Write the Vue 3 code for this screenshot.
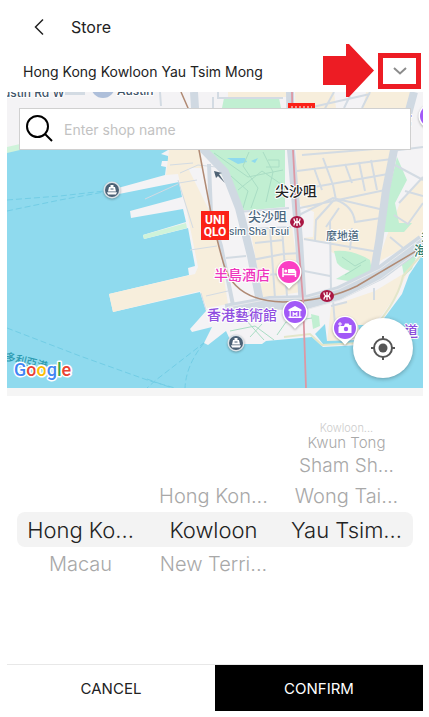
<script setup>
import { ref } from "vue";

const shopName = ref("");

const wheels = ref([
  { name: "Region", selected: 0, options: ["Hong Ko...", "Macau"] },
  {
    name: "Area",
    selected: 1,
    options: ["Hong Kon...", "Kowloon", "New Terri..."],
  },
  {
    name: "District",
    selected: 4,
    options: [
      "Kowloon...",
      "Kwun Tong",
      "Sham Sh...",
      "Wong Tai...",
      "Yau Tsim...",
    ],
  },
]);

// nine slots per wheel, the middle one is the current choice
const slots = [-4, -3, -2, -1, 0, 1, 2, 3, 4];

const labels = [
  { text: "ustin Rd W", x: 3, y: 97, size: 12, kind: "road-name" },
  { text: "Austin", x: 117, y: 95, size: 12, kind: "road-name" },
  { text: "尖沙咀", x: 275, y: 196, size: 14, kind: "station" },
  { text: "尖沙咀", x: 248, y: 221, size: 13, kind: "area" },
  { text: "sim Sha Tsui", x: 229, y: 235, size: 10, kind: "area" },
  { text: "麼地道", x: 326, y: 240, size: 11, kind: "area" },
  { text: "半島酒店", x: 214, y: 280, size: 14, kind: "hotel" },
  { text: "香港藝術館", x: 207, y: 320, size: 14, kind: "sight" },
  { text: "道", x: 404, y: 336, size: 14, kind: "sight" },
  { text: "館", x: 399, y: 124, size: 13, kind: "sight" },
  { text: "尖", x: 421, y: 240, size: 13, kind: "coast" },
  { text: "海", x: 414, y: 255, size: 13, kind: "coast" },
];

const pins = [
  { x: 289, y: 272, color: "#fb3fc4", icon: "bed" },
  { x: 295, y: 312, color: "#a259f7", icon: "museum" },
  { x: 345, y: 328, color: "#a259f7", icon: "camera" },
  { x: 431, y: 116, color: "#a259f7", icon: "" },
];

const ferries = [
  { x: 112, y: 190 },
  { x: 236, y: 343 },
];

const stations = [
  { x: 297, y: 222 },
  { x: 327, y: 296 },
];
</script>

<template>
  <main class="page">
    <header class="header">
      <button class="back" aria-label="Back">
        <svg width="12" height="18" viewBox="0 0 12 18">
          <path d="M10 1.500 2.500 9l7.500 7.500" />
        </svg>
      </button>
      <h1>Store</h1>
    </header>

    <section class="address">
      <span>Hong Kong Kowloon Yau Tsim Mong</span>
      <svg class="arrow" width="51" height="53" viewBox="0 0 51 53">
        <path d="M0 12h23V0h3l25 26.500L26 53h-3V41H0z" />
      </svg>
      <button class="toggle" aria-label="Change district">
        <svg width="14" height="8" viewBox="0 0 14 8">
          <path d="M1 1l6 5.500L13 1" />
        </svg>
      </button>
    </section>

    <section class="map">
      <svg class="canvas" viewBox="7 92 416 296">
        <rect x="7" y="92" width="416" height="296" fill="#8fdaee" />

        <!-- ferry routes -->
        <g class="route">
          <path d="M7 200 60 196 104 191M7 211 60 200 104 192" />
          <path d="M7 328 80 356 150 381 175 388" />
          <path d="M205 342 156 380 147 388M204 343q-18 22-19 45M147 379l25 9" />
        </g>

        <!-- land -->
        <path
          fill="#f4f3f5"
          d="M7 92H423V254L409 275 402 294 385 317 360 345 323 347 312 337 266 341 262 344 232 344 226 331 208 345 204 343 212 327 192 332 190 329 206 311 200 292 113 312 109 294 189 275 188 268 195 266 188 228 144 239 143 235 186 222 183 209 131 218 130 211 182 197 179 182 119 194 118 188 165 175 166 167 161 166 162 161 168 161 168 156 161 154 168 150 7 150z"
        />
        <path fill="#cff3da" d="M7 147 20 144V150L7 153zM143 235 186 223 187 228 144 239z" />

        <!-- city blocks -->
        <g fill="#f7eedc">
          <path d="M169 150H200L214 226 221 258 228 304 207 308 200 291 113 312 109 294 195 274 198 267 187 212 178 174 166 175z" />
          <path d="M228 92H286V97H228zM295 92H411L397 150 383 240 371 268 331 252 304 240 297 190z" />
          <path d="M250 228 292 227 301 292 263 298z" />
          <path d="M400 203 423 178V238L378 262 386 238z" />
          <path d="M331 306 375 291 408 271 397 294 382 315 358 338 327 343z" />
        </g>
        <g fill="#f4f3f5">
          <path d="M334 92H366L363 108H336zM305 240 330 242 334 289 304 295zM228 230 247 227 256 294 240 301z" />
          <path d="M300 205 314 212 313 237 301 238zM188 168 207 168 221 190 230 214 211 214z" />
        </g>
        <path class="lane" d="M145 199 178 184M170 165l23-2M180 173l18-8 18 2M179 183l18-3M178 180l15 48M190 250l27-4M201 293l5 17M206 296l22-5" />

        <!-- parks -->
        <g fill="#c1efd2">
          <path d="M224 98 279 98 281 108H222zM208 150H285V207L238 211 225 181z" />
          <path d="M397 157 407 180 395 203 399 223 412 223 404 232 382 232 388 195z" />
          <path d="M334 251q18-2 36 9l2 11-18 11-18-3 14-8q-8-2-13-8z" />
          <path d="M402 265 418 252 412 269 404 276zM311 314l8 2 1 10-7 3z" />
        </g>
        <g fill="#8fdaee">
          <path d="M227 158 245 158 247 162 238 164zM251 161 258 158 255 163zM315 334 325 324 327 341 358 340 359 344 323 344zM358 325h16l-14 10z" />
        </g>
        <path class="trail" d="M214 153 248 177 283 170M238 190 262 171 281 184M231 176 248 191 243 208M249 152 243 166 258 188 251 208M263 152l10 20-7 30M268 160h11v7h-13" />
        <path class="trail" d="M230 331 255 326 274 340M262 324 250 337M277 335 286 322 312 318M245 319 264 340M342 257l13 9 11-6M345 275l16-10" />
        <path d="M284 337 310 334 322 345 360 343Q397 306 403 276L423 253" fill="none" stroke="#e3e6ca" stroke-width="2" />

        <!-- streets -->
        <g class="street">
          <path d="M295 111 370 94M302 155 410 146M297 171 392 159M297 190 388 174M295 209 390 189M297 216 333 198 384 210M323 158 333 185 336 200Q353 206 355 222L381 218M334 200 316 220 315 240M334 92 323 112 318 150M350 96 344 108M370 92 362 108" />
          <path d="M345 164 352 183M359 162 365 191M371 160 377 190M314 168 322 190M304 239 379 252M330 221 331 292M304 271 330 276M352 228 350 250M339 208 326 227" />
          <path d="M160 92 161 106M213 97 213 108M218 92v6h65M238 212 289 208M249 229 291 227M252 260 283 254 301 253M270 228 275 298M282 228 287 296M255 243 283 240M257 275 287 274M226 258 246 256" />
          <path d="M391 151 423 147M399 203 423 177M394 215 408 224 423 203M405 191 423 196M395 165 423 180M390 237l18 15M333 300l3 37M331 306l16-4M374 288v12" />
        </g>
        <g class="road">
          <path d="M194 92 195 108 204 150 225 172 239 208 251 256 261 307" />
          <path d="M209 164 211 214 221 246 233 305" class="narrow" />
          <path d="M290 92 291 150 299 240 303 309" />
          <path d="M414 92 407 118 394 150 386 190 379 242 373 277" />
          <path d="M226 311 270 303 307 302 339 293 380 273 423 241" class="wide" />
        </g>
        <path d="M228 307 270 299 307 298 339 289 380 269 423 237M305 310 340 300 381 279 423 248" fill="none" stroke="#e7e9ec" />
        <path d="M181 92 188 108 199 150 211 213Q218 245 224 265 235 301 283 302 327 301 357 286L423 247" fill="none" stroke="#b08a74" stroke-width="1.500" />
        <path d="M292 92 293 150 297 225 303 300 306 388" fill="none" stroke="#dd98a4" stroke-width="1.800" />
        <path d="M214 171l8 2-3 1 6 9-7-7-2 2z" fill="#4f6274" />
        <circle cx="103" cy="86" r="12" fill="#aebfda" />
        <path d="M65 92h20v3H65z" fill="#d3dbe3" />

        <text
          v-for="label in labels"
          :key="label.text + label.x"
          :x="label.x"
          :y="label.y"
          :font-size="label.size"
          :class="['label', label.kind]"
        >
          {{ label.text }}
        </text>
        <text class="label harbour" x="4" y="360" font-size="11" transform="rotate(14 4 360)">多利亞港</text>

        <!-- shops -->
        <g class="shop">
          <rect x="288" y="103" width="27" height="27" />
          <path d="M291 107h21" stroke="#ffffff" stroke-dasharray="2 2" />
          <rect x="201" y="211" width="28" height="29" />
          <text x="215" y="224">UNI</text>
          <text x="215" y="236">QLO</text>
        </g>

        <g v-for="s in stations" :key="s.x" :transform="`translate(${s.x} ${s.y})`">
          <ellipse rx="7" ry="6" fill="#a91643" />
          <path d="M0-4V4M-3-3.500Q-3 0 0 0 3 0 3-3.500M-3 3.500Q-3 0 0 0 3 0 3 3.500" fill="none" stroke="#fff" stroke-width="1.300" />
        </g>

        <g v-for="f in ferries" :key="f.x" class="ferry" :transform="`translate(${f.x} ${f.y})`">
          <circle r="8.500" fill="#dbe3e8" />
          <circle r="7" fill="#4b6175" />
          <path d="M-1.500-5h3v2H3L4 1.500H-4L-3-3h1.500zM-5 2.200H5L4 4.500H-4z" fill="#fff" />
          <path d="M-1.500-1h3" stroke="#4b6175" />
        </g>

        <g v-for="p in pins" :key="p.y" class="pin" :transform="`translate(${p.x} ${p.y})`">
          <path d="M0 17Q-3 13-7 10.500A12.500 12.500 0 1 1 7 10.500Q3 13 0 17z" fill="#fff" />
          <circle r="11" :fill="p.color" />
          <g v-if="p.icon === 'bed'">
            <path d="M-6-4V5M-6 2.500H6.500M6.500-1V5" stroke="#fff" stroke-width="1.500" />
            <path d="M-1-3H5q1.500 0 1.500 1.500V1H-1z" fill="#fff" />
            <circle cx="-3.200" cy="-1" r="1.500" fill="#fff" />
          </g>
          <g v-if="p.icon === 'museum'">
            <path d="M-6.500-2.500 0-6 6.500-2.500V-1H-6.500zM-6.500 4.500H6.500V6H-6.500z" fill="#fff" />
            <path d="M-4.800-2V5M4.800-2V5M-1.800 4V0.800L0 2.500 1.800.8V4" fill="none" stroke="#fff" stroke-width="1.200" />
          </g>
          <g v-if="p.icon === 'camera'">
            <path d="M-5.500-2H-1L0-4.500H3.500L4.500-3H6.500V5H-6.500V-1z" fill="#fff" />
            <circle cx="1" cy="1" r="2.200" :fill="p.color" />
            <path d="M-5-6v4M-7-4h4" stroke="#fff" />
          </g>
        </g>

        <text class="google" x="14" y="376">
          <tspan fill="#4285f4">G</tspan><tspan fill="#ea4335">o</tspan><tspan fill="#fbbc05">o</tspan><tspan fill="#4285f4">g</tspan><tspan fill="#34a853">l</tspan><tspan fill="#ea4335">e</tspan>
        </text>
      </svg>

      <label class="search">
        <svg width="30" height="30" viewBox="0 0 30 30">
          <circle cx="12.500" cy="12.500" r="10.500" />
          <path d="M20 20l7 7" />
        </svg>
        <input
          v-model="shopName"
          type="text"
          placeholder="Enter shop name"
          aria-label="Shop name"
        />
      </label>

      <button class="locate" aria-label="My location">
        <svg width="24" height="24" viewBox="0 0 24 24">
          <circle cx="12" cy="12" r="9" fill="none" stroke="#555" stroke-width="2" />
          <circle cx="12" cy="12" r="4.500" fill="#555" />
          <path d="M12 0v4M12 20v4M0 12h4M20 12h4" stroke="#555" stroke-width="2" />
        </svg>
      </button>
    </section>

    <section class="picker">
      <div v-for="wheel in wheels" :key="wheel.name" class="wheel">
        <div v-for="slot in slots" :key="slot" :class="['slot', 'far-' + Math.abs(slot)]">
          <button
            v-if="wheel.options[wheel.selected + slot]"
            @click="wheel.selected += slot"
          >
            {{ wheel.options[wheel.selected + slot] }}
          </button>
        </div>
      </div>
    </section>

    <footer class="actions">
      <button>CANCEL</button>
      <button class="confirm">CONFIRM</button>
    </footer>
  </main>
</template>

<style>
body {
  background-color: #ffffff;
}
</style>

<style scoped>
.page {
  margin: 0 6px 0 7px;
  font-family: Inter, "Noto Sans CJK TC", sans-serif;
  color: #222222;
}

button {
  border: 0;
  padding: 0;
  background: none;
  font-family: inherit;
  color: inherit;
  cursor: pointer;
}

svg {
  display: block;
}

.header {
  display: flex;
  align-items: center;
  gap: 26px;
  height: 54px;
  padding-left: 26px;
}

.header h1 {
  margin: 0;
  font-size: 16px;
  font-weight: 400;
}

.back path {
  fill: none;
  stroke: #222222;
  stroke-width: 1.5;
}

.address {
  position: relative;
  display: flex;
  align-items: center;
  justify-content: space-between;
  box-sizing: border-box;
  height: 38px;
  padding: 0 2px 4px 16px;
  font-size: 14px;
}

.arrow {
  position: absolute;
  z-index: 2;
  right: 49px;
  top: -10px;
  fill: #ed1c24;
}

.toggle {
  display: flex;
  align-items: center;
  justify-content: center;
  flex-shrink: 0;
  width: 43px;
  height: 36px;
  border: 5px solid #ed1c24;
}

.toggle path {
  fill: none;
  stroke: #8c8c8c;
  stroke-width: 2;
}

.map {
  position: relative;
}

.canvas {
  width: 100%;
}

.route {
  fill: none;
  stroke: #72cde5;
  stroke-width: 1;
  stroke-dasharray: 6 3;
}

.street,
.lane {
  fill: none;
  stroke: #d3dbe3;
  stroke-width: 2;
}

.lane {
  stroke-width: 1;
}

.trail {
  fill: none;
  stroke: #a9ddc4;
  stroke-width: 1;
}

.road {
  fill: none;
  stroke: #d0d9e2;
  stroke-width: 8;
}

.road .narrow {
  stroke-width: 4;
}

.road .wide {
  stroke-width: 14;
}

.label {
  paint-order: stroke;
  stroke: #ffffff;
  stroke-width: 2px;
  stroke-linejoin: round;
  font-weight: 500;
}

.road-name {
  fill: #3f5468;
}

.station {
  fill: #222222;
}

.area {
  fill: #4c6880;
}

.hotel {
  fill: #ee35bd;
}

.sight {
  fill: #8f4ee0;
}

.coast {
  fill: #35806f;
}

.harbour {
  fill: #2d9ab0;
  stroke: none;
}

.shop rect {
  fill: #fb2117;
}

.shop text {
  fill: #ffffff;
  font-family: Roboto, sans-serif;
  font-size: 12px;
  font-weight: 700;
  text-anchor: middle;
}

.ferry,
.pin {
  filter: drop-shadow(0 1px 1px rgba(0, 0, 0, 0.3));
}

.google {
  font-family: Roboto, sans-serif;
  font-size: 18px;
  font-weight: 500;
  paint-order: stroke;
  stroke: #ffffff;
  stroke-width: 3px;
  stroke-linejoin: round;
}

.search {
  position: absolute;
  top: 16px;
  left: 12px;
  right: 12px;
  display: flex;
  align-items: center;
  gap: 9px;
  box-sizing: border-box;
  height: 42px;
  padding: 0 5px;
  border: 1px solid #d0d0d0;
  background-color: #ffffff;
}

.search svg {
  flex-shrink: 0;
  fill: none;
  stroke: #000000;
  stroke-width: 2;
}

.search input {
  flex: 1;
  min-width: 0;
  border: 0;
  padding: 0;
  outline: none;
  background: none;
  font-family: inherit;
  font-size: 14px;
  color: #222222;
}

.search input::placeholder {
  color: #c2c2c2;
}

.locate {
  position: absolute;
  right: 10px;
  bottom: 10px;
  display: flex;
  align-items: center;
  justify-content: center;
  width: 60px;
  height: 60px;
  border-radius: 50%;
  background-color: #ffffff;
  box-shadow: 0 1px 4px rgba(0, 0, 0, 0.3);
}

.picker {
  display: grid;
  grid-template-columns: repeat(3, 1fr);
  padding: 26px 10px 27px 7px;
  border-top: 8px solid #f5f5f5;
  background-color: #ffffff;
}

.slot {
  display: flex;
  align-items: center;
  justify-content: center;
  font-weight: 300;
  color: #a8a8a8;
}

.slot button {
  white-space: nowrap;
  font-size: inherit;
  font-weight: inherit;
  line-height: 1;
}

.far-0 {
  height: 35px;
  background-color: #f3f3f3;
  font-size: 22px;
  color: #222222;
}

.wheel:first-child .far-0 {
  margin-left: 3px;
  padding-right: 3px;
  border-radius: 8px 0 0 8px;
}

.wheel:last-child .far-0 {
  border-radius: 0 8px 8px 0;
}

.far-1 {
  height: 33px;
  font-size: 20px;
}

.far-2 {
  height: 28px;
  font-size: 19px;
}

.far-3 {
  height: 17px;
  font-size: 15px;
}

.far-4 {
  height: 12px;
  font-size: 11px;
  color: #cccccc;
}

.actions {
  display: grid;
  grid-template-columns: 1fr 1fr;
  border-top: 1px solid #e8e8e8;
}

.actions button {
  height: 46px;
  font-size: 15px;
}

.actions .confirm {
  background-color: #000000;
  color: #ffffff;
}
</style>
